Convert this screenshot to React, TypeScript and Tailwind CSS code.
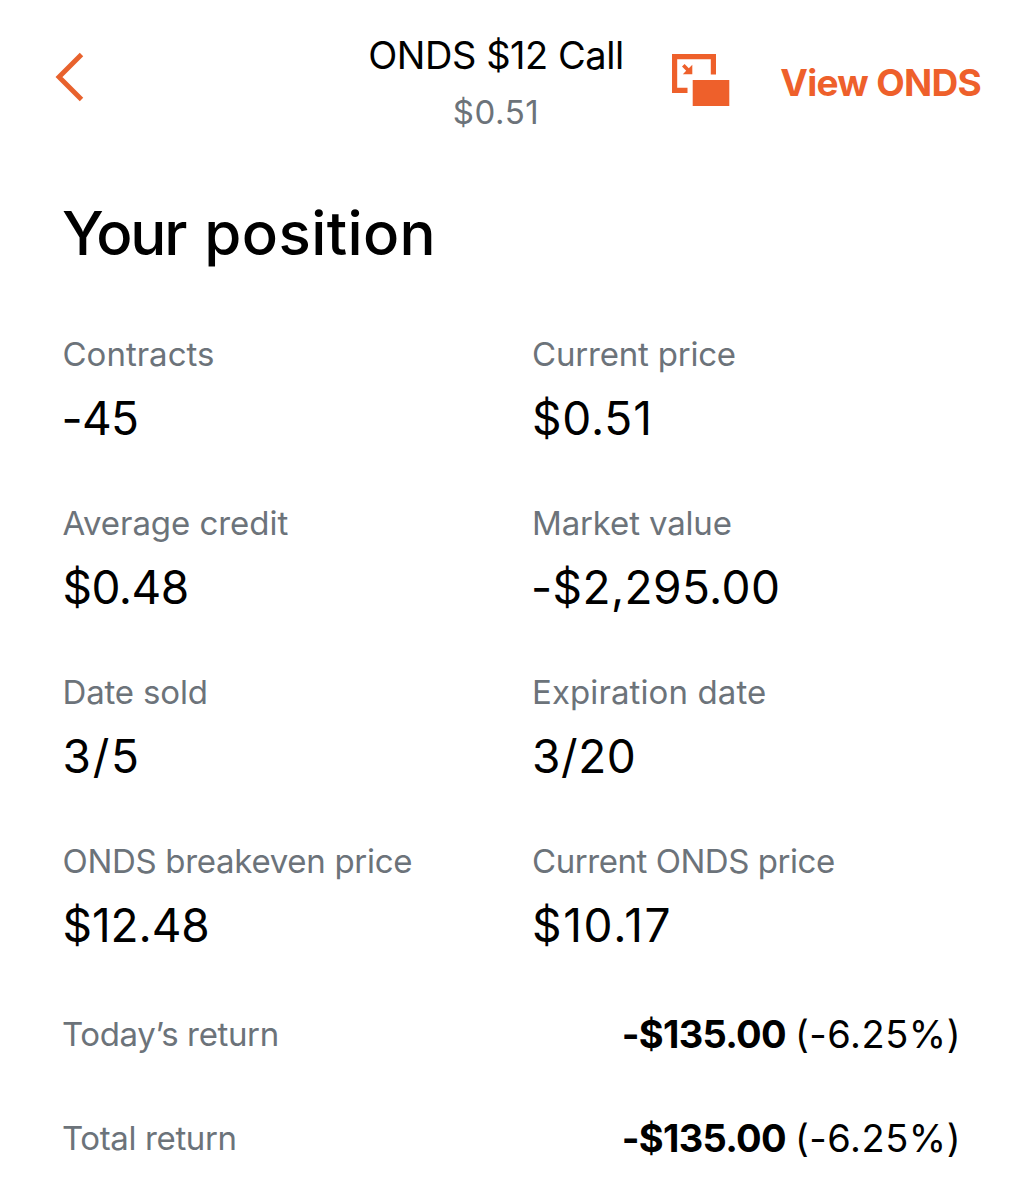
type Stat = {
  label: string;
  value: string;
  labelClass: string;
  valueClass: string;
};

const stats: Stat[] = [
  { label: "Contracts", value: "-45", labelClass: "", valueClass: "tracking-[-0.7px] -ml-px" },
  { label: "Current price", value: "$0.51", labelClass: "tracking-[-0.2px]", valueClass: "tracking-[0.8px]" },
  { label: "Average credit", value: "$0.48", labelClass: "tracking-[-0.05px]", valueClass: "tracking-[-0.5px]" },
  { label: "Market value", value: "-$2,295.00", labelClass: "tracking-[-0.15px]", valueClass: "tracking-[0.4px] -ml-px" },
  { label: "Date sold", value: "3/5", labelClass: "tracking-[-0.15px]", valueClass: "tracking-[1.8px]" },
  { label: "Expiration date", value: "3/20", labelClass: "tracking-[0.1px]", valueClass: "tracking-[0.6px]" },
  { label: "ONDS breakeven price", value: "$12.48", labelClass: "tracking-[-0.3px]", valueClass: "tracking-[-0.1px]" },
  { label: "Current ONDS price", value: "$10.17", labelClass: "tracking-[-0.45px]", valueClass: "tracking-[1.7px]" },
];

const returns = [
  { label: "Today’s return", amount: "-$135.00", percent: "(-6.25%)" },
  { label: "Total return", amount: "-$135.00", percent: "(-6.25%)" },
];

function BackIcon() {
  return (
    <svg width="30" height="50" viewBox="0 0 30 50" fill="none" className="block">
      <path d="M26.5 2.5 L4 25 L26.5 47.5" stroke="#e8622d" strokeWidth="4.9" />
    </svg>
  );
}

function PipIcon() {
  return (
    <svg width="58" height="53" viewBox="0 0 58 53" fill="#ee602b" className="block">
      <path d="M0 0H44V20.5H38.8V5.2H5.2V33.8H15.5V39H0Z" />
      <path d="M20.7 26H57.3V52H20.7Z" />
      <path d="M20.3 10.8V20.3H10.8L14.2 16.8L10 12.6L12.6 10L16.8 14.2Z" />
    </svg>
  );
}

export default function App() {
  return (
    <main className="h-[1200px] w-[1023px] overflow-hidden bg-white font-['Inter',sans-serif] text-black">
      <header className="grid h-[150px] grid-cols-[368px_256px_1fr] pr-[42px]">
        <div className="pt-[52px] pl-[55px]">
          <BackIcon />
        </div>
        <div className="flex flex-col items-center pt-[33px] whitespace-nowrap">
          <h2 className="text-[38px] leading-[44px] tracking-[-0.45px]">ONDS $12 Call</h2>
          <p className="mt-[15px] text-[33px] leading-[40px] tracking-[0.6px] text-[#6c737a]">$0.51</p>
        </div>
        <div className="flex items-start justify-between pl-[47.5px]">
          <div className="pt-[54px]">
            <PipIcon />
          </div>
          <span className="pt-[61px] text-[37px] leading-[44px] font-bold tracking-[-0.7px] whitespace-nowrap text-[#ee602b]">
            View ONDS
          </span>
        </div>
      </header>

      <h1 className="mt-[47px] pl-[62px] text-[60px] leading-[72px] font-medium whitespace-nowrap">
        <span className="tracking-[-2.2px]">Your</span> <span className="ml-[3px] tracking-[0.4px]">position</span>
      </h1>

      <section className="mt-[64.5px] grid grid-cols-[469.5px_1fr] gap-y-[57.2px] pl-[62.5px] whitespace-nowrap">
        {stats.map((s) => (
          <div key={s.label}>
            <div className={`text-[33px] leading-[40px] text-[#6c737a] ${s.labelClass}`}>{s.label}</div>
            <div className={`mt-4 text-[46px] leading-[56px] ${s.valueClass}`}>{s.value}</div>
          </div>
        ))}
      </section>

      <section className="mt-[59px] flex flex-col gap-[59.5px] pr-[62px] pl-[62px] whitespace-nowrap">
        {returns.map((r) => (
          <div key={r.label} className="flex h-[44px] items-center justify-between">
            <span className="text-[33px] leading-[40px] tracking-[-0.37px] text-[#6c737a]">{r.label}</span>
            <span className="flex text-[38px] leading-[44px]">
              <span className="font-bold tracking-[-0.7px]">{r.amount}</span>
              <span className="ml-[9px] tracking-[0.5px]">{r.percent}</span>
            </span>
          </div>
        ))}
      </section>
    </main>
  );
}
